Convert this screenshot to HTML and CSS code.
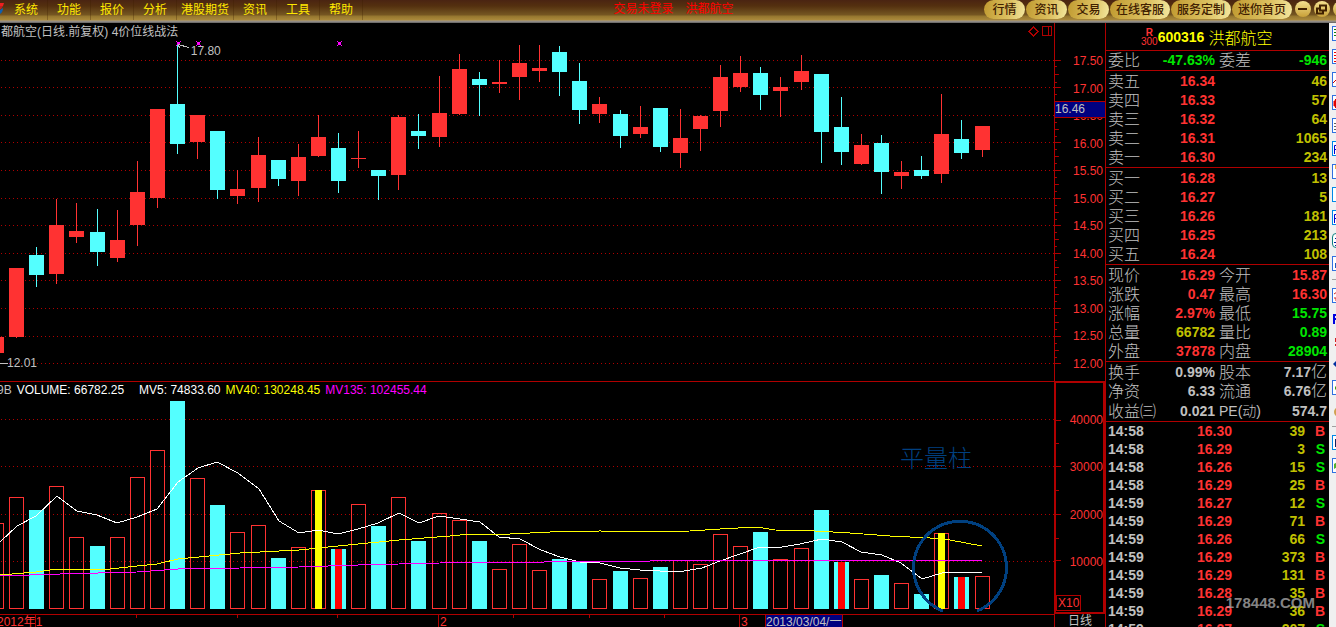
FILE: index.html
```
<!DOCTYPE html>
<html lang="zh-CN">
	<head>
		<meta charset="utf-8">
		<title>洪都航空 600316</title>
		<link rel="stylesheet" href="styles.css">
	</head>
	<body>
		<header class="topbar">
			<svg class="topbar__logo" width="5" height="18" viewBox="0 0 5 18">
				<path d="M0 3H4L3 6H0z" fill="#f02020"/>
				<path d="M0 6H3L1 9H0z" fill="#c02020"/>
				<path d="M0 10L3 8Q3 12 0 14z" fill="#1060b0"/>
			</svg>
			<nav class="menu">
				<button type="button" class="menu__item">系统</button>
				<button type="button" class="menu__item">功能</button>
				<button type="button" class="menu__item">报价</button>
				<button type="button" class="menu__item">分析</button>
				<button type="button" class="menu__item">港股期货</button>
				<button type="button" class="menu__item">资讯</button>
				<button type="button" class="menu__item">工具</button>
				<button type="button" class="menu__item">帮助</button>
			</nav>
			<div class="status"><span>交易未登录</span><span>洪都航空</span></div>
			<div class="pills">
				<button type="button" class="pill">行情</button>
				<button type="button" class="pill">资讯</button>
				<button type="button" class="pill">交易</button>
				<button type="button" class="pill">在线客服</button>
				<button type="button" class="pill">服务定制</button>
				<button type="button" class="pill">迷你首页</button>
				<button type="button" class="round-button" aria-label="最小化">
					<svg width="15" height="15" viewBox="0 0 15 15"><path d="M3 7H12" stroke="#402000" stroke-width="2"/></svg>
				</button>
				<button type="button" class="round-button" aria-label="还原">
					<svg width="15" height="15" viewBox="0 0 15 15"><path d="M6 3.500H12V8.500H6zM6 6.500H3V11.500H9V9" fill="none" stroke="#402000" stroke-width="2"/></svg>
				</button>
				<button type="button" class="round-button" aria-label="关闭">
					<svg width="15" height="15" viewBox="0 0 15 15"><path d="M4 4L11 11M11 4L4 11" stroke="#402000" stroke-width="2"/></svg>
				</button>
			</div>
		</header>
		<main class="workspace">
			<section class="pane pane--price">
				<svg class="pane__canvas" viewBox="0 23 1054 358" preserveAspectRatio="none">
					<path class="grid" d="M1 60.500H1054M1 87.500H1054M1 115.500H1054M1 142.500H1054M1 170.500H1054M1 198.500H1054M1 225.500H1054M1 253.500H1054M1 280.500H1054M1 308.500H1054M1 336.500H1054M1 363.500H1054"/>
					<!-- wicks -->
					<path class="wick wick--up" d="M16.500 268V338M56.500 199V284M76.500 203V243M117.500 210V262M137.500 161V246M157.500 109V208M197.500 115V159M237.500 170V204M258.500 137V202M298.500 144V196M318.500 115V157M358.500 131V168M398.500 115V190M439.500 76V147M459.500 54V115M499.500 60V93M519.500 45V100M539.500 45V82M599.500 97V123M640.500 106V138M680.500 109V168M700.500 115V151M720.500 65V127M740.500 56V92M780.500 77V117M801.500 55V90M861.500 134V165M901.500 161V189M941.500 94V183M982.500 126V157"/>
					<path class="wick wick--down" d="M36.500 247V287M97.500 209V266M177.500 45V154M217.500 131V199M278.500 160V186M338.500 133V193M378.500 170V200M418.500 114V149M479.500 72V116M559.500 46V96M579.500 63V124M620.500 110V148M660.500 108V152M760.500 67V110M821.500 74V163M841.500 97V165M881.500 135V194M921.500 156V179M961.500 120V159"/>
					<!-- bodies -->
					<path class="body--up" d="M0 337h4v16h-4zM9 268h15v69h-15zM49 225h15v49h-15zM69 231h15v6h-15zM110 240h15v18h-15zM130 192h15v33h-15zM150 109h15v89h-15zM190 115h15v27h-15zM230 189h15v7h-15zM251 155h15v33h-15zM291 157h15v24h-15zM311 137h15v19h-15zM351 158h15v1h-15zM391 117h15v58h-15zM432 113h15v24h-15zM452 69h15v45h-15zM492 82h15v2h-15zM512 63h15v14h-15zM532 68h15v3h-15zM592 104h15v10h-15zM633 127h15v7h-15zM673 138h15v15h-15zM693 116h15v13h-15zM713 77h15v34h-15zM733 73h15v14h-15zM773 87h15v4h-15zM794 71h15v11h-15zM854 145h15v19h-15zM894 172h15v4h-15zM934 134h15v40h-15zM975 126h15v24h-15z"/>
					<path class="body--down" d="M29 255h15v20h-15zM90 232h15v20h-15zM170 104h15v40h-15zM210 131h15v59h-15zM271 160h15v19h-15zM331 148h15v33h-15zM371 170h15v6h-15zM411 131h15v5h-15zM472 79h15v6h-15zM552 52h15v20h-15zM572 81h15v29h-15zM613 114h15v22h-15zM653 108h15v39h-15zM753 73h15v22h-15zM814 74h15v58h-15zM834 127h15v25h-15zM874 143h15v29h-15zM914 170h15v6h-15zM954 139h15v14h-15z"/>
					<!-- event marks -->
					<path class="event" d="M177 42h3v3h-3zM176 41h1v1h-1zM180 41h1v1h-1zM176 45h1v1h-1zM180 45h1v1h-1zM197 42h3v3h-3zM196 41h1v1h-1zM200 41h1v1h-1zM196 45h1v1h-1zM200 45h1v1h-1zM338 42h3v3h-3zM337 41h1v1h-1zM341 41h1v1h-1zM337 45h1v1h-1zM341 45h1v1h-1z"/>
					<path class="pointer" d="M178 44.500L189 47.500M178 45L180 48M0 363.500H8"/>
					<path class="corner-icon" d="M1033.500 27L1038 31.500L1033.500 36L1029 31.500zM1042.500 26.500H1051.500V35.500H1042.500zM1048.500 26.500V35.500"/>
				</svg>
				<h1 class="pane__title">都航空(日线.前复权) 4价位线战法</h1>
				<span class="note note--high">17.80</span>
				<span class="note note--low">12.01</span>
			</section>
			<section class="scale scale--price">
				<svg class="pane__canvas" viewBox="0 23 51 358" preserveAspectRatio="none">
					<path class="tick" d="M0 60.500H6M0 87.500H6M0 115.500H6M0 142.500H6M0 170.500H6M0 198.500H6M0 225.500H6M0 253.500H6M0 280.500H6M0 308.500H6M0 336.500H6M0 363.500H6"/>
					<path class="tick" d="M0 66.500H2M0 74.500H4M0 82.500H2M0 94.500H2M0 101.500H4M0 122.500H2M0 129.500H4M0 136.500H2M0 149.500H2M0 156.500H4M0 163.500H2M0 177.500H2M0 184.500H4M0 191.500H2M0 205.500H2M0 212.500H4M0 219.500H2M0 232.500H2M0 239.500H4M0 246.500H2M0 260.500H2M0 267.500H4M0 274.500H2M0 287.500H2M0 294.500H4M0 301.500H2M0 315.500H2M0 322.500H4M0 329.500H2M0 343.500H2M0 350.500H4M0 357.500H2"/>
				</svg>
				<ol class="scale__labels">
					<li>17.50</li>
					<li>17.00</li>
					<li>16.50</li>
					<li>16.00</li>
					<li>15.50</li>
					<li>15.00</li>
					<li>14.50</li>
					<li>14.00</li>
					<li>13.50</li>
					<li>13.00</li>
					<li>12.50</li>
					<li>12.00</li>
				</ol>
				<span class="cursor-price">16.46</span>
			</section>
			<section class="pane pane--volume">
				<svg class="pane__canvas" viewBox="0 382 1054 232" preserveAspectRatio="none">
					<path class="grid" d="M1 419.500H1054M1 466.500H1054M1 514.500H1054M1 561.500H1054"/>
					<path class="volume--up" d="M-10.500 523.500h14v85h-14zM9.500 497.500h14v111h-14zM49.500 486.500h14v122h-14zM69.500 537.500h14v71h-14zM110.500 537.500h14v71h-14zM130.500 477.500h14v131h-14zM150.500 450.500h14v158h-14zM190.500 478.500h14v130h-14zM230.500 532.500h14v76h-14zM251.500 525.500h14v83h-14zM291.500 547.500h14v61h-14zM311.500 490.500h14v118h-14zM351.500 504.500h14v104h-14zM391.500 497.500h14v111h-14zM432.500 513.500h14v95h-14zM452.500 520.500h14v88h-14zM492.500 569.500h14v39h-14zM512.500 544.500h14v64h-14zM532.500 570.500h14v38h-14zM592.500 579.500h14v29h-14zM633.500 578.500h14v30h-14zM673.500 560.500h14v48h-14zM693.500 564.500h14v44h-14zM713.500 534.500h14v74h-14zM733.500 546.500h14v62h-14zM773.500 559.500h14v49h-14zM794.500 548.500h14v60h-14zM854.500 579.500h14v29h-14zM894.500 583.500h14v25h-14zM934.500 533.500h14v75h-14zM975.500 576.500h14v32h-14z"/>
					<path class="body--down" d="M29 510h15v99h-15zM90 546h15v63h-15zM170 401h15v208h-15zM210 505h15v104h-15zM271 558h15v51h-15zM331 549h15v60h-15zM371 526h15v83h-15zM411 541h15v68h-15zM472 541h15v68h-15zM552 559h15v50h-15zM572 562h15v47h-15zM613 571h15v38h-15zM653 567h15v42h-15zM753 532h15v77h-15zM814 510h15v99h-15zM834 562h15v47h-15zM874 575h15v34h-15zM914 594h15v15h-15zM954 577h15v32h-15z"/>
					<path class="bar--yellow" d="M315 490h7v119h-7zM938 533h7v76h-7z"/>
					<path class="bar--red" d="M335 549h7v60h-7zM838 562h7v47h-7zM958 577h7v32h-7z"/>
					<!-- moving averages -->
					<polyline class="line line--mv5" points="0,542 17,526 36,516 57,496 77,511 97,515 117,523 137,517 157,509 178,482 198,468 217,462 238,473 259,489 279,521 299,533 318,530 338,534 358,529 378,523 399,513 419,523 439,516 460,519 480,522 499,537 520,539 541,550 560,557 580,562 600,563 620,568 640,570 660,571 684,571 702,568 720,561 740,554 760,547 782,547 800,544 822,539 842,542 861,552 882,555 901,563 922,579 942,573 962,572 982,573"/>
					<polyline class="line line--mv40" points="0,575 36,572 57,569 110,569 137,566 157,564 178,559 240,553 299,550 338,546 399,540 450,536 470,534 510,534 550,532 600,531 650,532 690,531 720,529 757,527 775,530 815,531 850,533 890,536 930,538 950,540 982,546"/>
					<polyline class="line line--mv135" points="0,576 60,574 137,572 178,569 240,568 299,567 358,565 440,563 650,561 755,560 982,560"/>
					<path class="ring" d="M943 611A46.500 46.500 0 1 1 977 611"/>
				</svg>
				<p class="legend"><span class="legend__name">9B</span><span>VOLUME: 66782.25</span><span class="legend__mv5">MV5: 74833.60</span><span class="legend__mv40">MV40: 130248.45</span><span class="legend__mv135">MV135: 102455.44</span></p>
				<span class="note note--columns">平量柱</span>
			</section>
			<section class="scale scale--volume">
				<svg class="pane__canvas" viewBox="0 382 49 231" preserveAspectRatio="none">
					<path class="tick" d="M0 419.500H5M0 443.500H3M0 466.500H5M0 490.500H3M0 514.500H5M0 538.500H3M0 561.500H5"/>
				</svg>
				<ol class="scale__labels">
					<li>40000</li>
					<li>30000</li>
					<li>20000</li>
					<li>10000</li>
				</ol>
				<span class="multiplier">X10</span>
			</section>
			<section class="dates">
				<svg class="pane__canvas" viewBox="0 615 1054 12" preserveAspectRatio="none">
					<path class="tick" d="M35.500 615V627M136.500 615V618M237.500 615V618M337.500 615V618M513.500 615V618M589.500 615V618M664.500 615V618"/>
				</svg>
				<span class="dates__first">2012年1</span>
				<span class="dates__month">2</span>
				<span class="dates__month">3</span>
				<span class="dates__current">2013/03/04/一</span>
			</section>
			<div class="period">日线</div>

			<aside class="quote">
				<h2 class="quote__title"><span class="quote__badge"><b>R</b><span>300</span></span><b>600316</b><span class="quote__name">洪都航空</span></h2>
				<table class="data">
					<colgroup><col class="col-label"><col class="col-value"><col class="col-label2"><col></colgroup>
					<tbody class="data__group data__group--tight">
						<tr><th>委比</th><td class="green">-47.63%</td><th>委差</th><td class="green">-946</td></tr>
					</tbody>
					<tbody class="data__group">
						<tr><th>卖五</th><td class="red">16.34</td><td colspan="2" class="gold">46</td></tr>
						<tr><th>卖四</th><td class="red">16.33</td><td colspan="2" class="gold">57</td></tr>
						<tr><th>卖三</th><td class="red">16.32</td><td colspan="2" class="gold">64</td></tr>
						<tr><th>卖二</th><td class="red">16.31</td><td colspan="2" class="gold">1065</td></tr>
						<tr><th>卖一</th><td class="red">16.30</td><td colspan="2" class="gold">234</td></tr>
					</tbody>
					<tbody class="data__group">
						<tr><th>买一</th><td class="red">16.28</td><td colspan="2" class="gold">13</td></tr>
						<tr><th>买二</th><td class="red">16.27</td><td colspan="2" class="gold">5</td></tr>
						<tr><th>买三</th><td class="red">16.26</td><td colspan="2" class="gold">181</td></tr>
						<tr><th>买四</th><td class="red">16.25</td><td colspan="2" class="gold">213</td></tr>
						<tr><th>买五</th><td class="red">16.24</td><td colspan="2" class="gold">108</td></tr>
					</tbody>
					<tbody class="data__group">
						<tr><th>现价</th><td class="red">16.29</td><th>今开</th><td class="red">15.87</td></tr>
						<tr><th>涨跌</th><td class="red">0.47</td><th>最高</th><td class="red">16.30</td></tr>
						<tr><th>涨幅</th><td class="red">2.97%</td><th>最低</th><td class="green">15.75</td></tr>
						<tr><th>总量</th><td class="gold">66782</td><th>量比</th><td class="green">0.89</td></tr>
						<tr><th>外盘</th><td class="red">37878</td><th>内盘</th><td class="green">28904</td></tr>
					</tbody>
					<tbody class="data__group">
						<tr><th>换手</th><td>0.99%</td><th>股本</th><td>7.17<span class="unit">亿</span></td></tr>
						<tr><th>净资</th><td>6.33</td><th>流通</th><td>6.76<span class="unit">亿</span></td></tr>
						<tr><th>收益㈢</th><td>0.021</td><th class="latin">PE(动)</th><td>574.7</td></tr>
					</tbody>
				</table>
				<table class="ticks">
					<tbody>
						<tr><td>14:58</td><td class="red">16.30</td><td class="gold">39</td><td class="red">B</td></tr>
						<tr><td>14:58</td><td class="red">16.29</td><td class="gold">3</td><td class="green">S</td></tr>
						<tr><td>14:58</td><td class="red">16.26</td><td class="gold">15</td><td class="green">S</td></tr>
						<tr><td>14:58</td><td class="red">16.29</td><td class="gold">25</td><td class="red">B</td></tr>
						<tr><td>14:59</td><td class="red">16.27</td><td class="gold">12</td><td class="green">S</td></tr>
						<tr><td>14:59</td><td class="red">16.29</td><td class="gold">71</td><td class="red">B</td></tr>
						<tr><td>14:59</td><td class="red">16.26</td><td class="gold">66</td><td class="green">S</td></tr>
						<tr><td>14:59</td><td class="red">16.29</td><td class="gold">373</td><td class="red">B</td></tr>
						<tr><td>14:59</td><td class="red">16.29</td><td class="gold">131</td><td class="red">B</td></tr>
						<tr><td>14:59</td><td class="red">16.28</td><td class="gold">35</td><td class="red">B</td></tr>
						<tr><td>14:59</td><td class="red">16.29</td><td class="gold">36</td><td class="red">B</td></tr>
						<tr><td>14:59</td><td class="red">16.27</td><td class="gold">207</td><td class="green">S</td></tr>
					</tbody>
				</table>
				<span class="watermark">178448.COM</span>
			</aside>

			<div class="toolbar">
				<button type="button" class="tool" aria-label="报价列表"><svg width="13" height="13"><path d="M1 2.500H11M1 5.500H11M1 8.500H11" stroke="#108010"/></svg></button>
				<button type="button" class="tool" aria-label="涨幅排行"><svg width="13" height="13"><path d="M1 2.500H11M1 5.500H11M1 8.500H11M1 11.500H11" stroke="#f00000"/></svg></button>
				<button type="button" class="tool" aria-label="分时走势"><svg width="13" height="13"><path d="M0 10L3 7L6 9L11 3" fill="none" stroke="#d00000"/></svg></button>
				<button type="button" class="tool" aria-label="K线"><svg width="13" height="13"><path d="M1 5H5V10H1zM2.500 3V12" fill="#e00000" stroke="#e00000"/></svg></button>
				<button type="button" class="tool" aria-label="成交明细"><svg width="13" height="13"><path d="M1 4.500H11M1 7.500H11M1 10.500H11" stroke="#606060"/></svg></button>
				<button type="button" class="tool tool--cyan" aria-label="F10资料"><svg width="13" height="13"><path d="M1.500 12V3.500H8M1 7.500H6" fill="none" stroke="#0000d0"/></svg></button>
				<button type="button" class="tool" aria-label="备忘"><svg width="13" height="13"><path d="M2 0H8V4H2z" fill="#f0b040"/></svg></button>
				<button type="button" class="tool tool--cyan" aria-label="新建"></button>
				<button type="button" class="tool tool--cyan" aria-label="公式"><svg width="13" height="13"><path d="M1.500 12V3.500H8M1 7.500H6" fill="none" stroke="#0000d0"/></svg></button>
				<button type="button" class="tool tool--teal" aria-label="周期"><svg width="13" height="13"><path d="M2 4.500H7M1 8.500H7M2 11.500H4" stroke="#0020a0"/></svg></button>
				<button type="button" class="tool" aria-label="统计"><svg width="13" height="13"><path d="M2 6H5V11H2z" fill="#2060c0"/></svg></button>
				<hr class="toolbar__rule">
				<button type="button" class="tool" aria-label="画线"><svg width="13" height="13"><path d="M1 5L4 3M1 9H3V12" fill="none" stroke="#d02020"/></svg></button>
				<button type="button" class="tool tool--flat" aria-label="打印"><svg width="13" height="13"><path d="M1 12V3H7V7H1" fill="none" stroke="#0000e0" stroke-width="2"/></svg></button>
				<button type="button" class="tool tool--flat" aria-label="预警"><svg width="13" height="13"><path d="M2 3H6V7H2zM2 9H6V11H2z" fill="#d02020"/></svg></button>
				<button type="button" class="tool tool--flat" aria-label="移动"><svg width="13" height="13"><path d="M0 6L4 2V10z" fill="#0030a0"/></svg></button>
				<button type="button" class="tool" aria-label="加入自选"><svg width="13" height="13"><path d="M2 7H8" stroke="#40a010" stroke-width="3"/></svg></button>
				<button type="button" class="tool tool--flat" aria-label="金币"><svg width="13" height="13"><circle cx="6" cy="8" r="5" fill="#d0a050"/></svg></button>
				<hr class="toolbar__rule">
				<button type="button" class="tool tool--cyan" aria-label="窗口"><svg width="13" height="13"><path d="M2 3H8V11H2z" fill="#102060"/></svg></button>
				<button type="button" class="tool" aria-label="图表"><svg width="13" height="13"><path d="M1 10V5L4 3V8z" fill="#50b030"/></svg></button>
			</div>
		</main>
	</body>
</html>
```
FILE: styles.css
```
* {
	box-sizing: border-box;
}
body {
	display: grid;
	grid-template-rows: 23px minmax(0, 1fr);
	margin: 0;
	height: 100vh;
	overflow: hidden;
	background: #000;
	color: #c0c0c0;
	font-family: "Liberation Sans", "Noto Sans CJK SC", sans-serif;
	font-size: 12px;
}
button {
	border: 0;
	margin: 0;
	padding: 0;
	font: inherit;
	cursor: pointer;
	flex: none;
}
h1, h2, p, ol {
	margin: 0;
	padding: 0;
	font-size: 12px;
	font-weight: normal;
	list-style: none;
}

/* top bar */
.topbar {
	display: flex;
	align-items: flex-start;
	overflow: hidden;
	white-space: nowrap;
	background: linear-gradient(#4a2412 0, #54300f 6px, #66461a 11px, #765722 15px, #94752e 16px, #ab8a3c 20px, #a09890 21px, #606060 23px);
}
.topbar__logo {
	flex: none;
}
.menu {
	display: flex;
}
.menu__item {
	min-width: 43px;
	height: 20px;
	padding: 0 4px;
	background: none;
	border-right: 1px solid rgba(60, 30, 0, 0.3);
	color: #ffe800;
	line-height: 21px;
}
.status {
	display: flex;
	gap: 12px;
	margin: 0 auto;
	color: #f00;
	line-height: 19px;
}
.pills {
	display: flex;
	gap: 1px;
	margin-right: -13px;
}
.pill {
	height: 19px;
	padding: 0 6px;
	min-width: 41px;
	border-radius: 10px;
	background: linear-gradient(100deg, #c09a30, #dcc060 60%, #f4e8a0);
	color: #402000;
	font-weight: 500;
	line-height: 18px;
}
.round-button {
	width: 16px;
	height: 16px;
	margin: 1px 0 0 2px;
	border-radius: 8px;
	background: linear-gradient(#f4e090, #c8a038);
}
.round-button svg {
	display: block;
}

/* workspace */
.workspace {
	display: grid;
	grid-template-columns: minmax(0, 1fr) 51px 224px 7px;
	grid-template-rows: minmax(0, 358fr) minmax(0, 233fr) 13px;
	grid-template-areas:
		"price price-scale quote toolbar"
		"volume volume-scale quote toolbar"
		"dates period quote toolbar";
}
.pane,
.scale,
.dates {
	position: relative;
	overflow: hidden;
}
.pane--price {
	grid-area: price;
}
.pane--volume {
	grid-area: volume;
	border-top: 1px solid #b00000;
}
.pane__canvas {
	position: absolute;
	top: 0;
	left: 0;
	width: 100%;
	height: 100%;
	shape-rendering: crispEdges;
}
.pane__title {
	position: relative;
	padding-left: 1px;
	line-height: 19px;
}
.grid {
	stroke: #b00000;
	stroke-dasharray: 1 3;
}
.wick--up {
	stroke: #ff3232;
}
.wick--down {
	stroke: #54ffff;
}
.body--up {
	fill: #ff3232;
}
.body--down {
	fill: #54ffff;
}
.volume--up {
	fill: none;
	stroke: #ff3232;
}
.bar--yellow {
	fill: #ff0;
}
.bar--red {
	fill: #f00;
}
.event {
	fill: #f0f;
}
.pointer {
	stroke: #c0c0c0;
}
.corner-icon {
	fill: none;
	stroke: #b00000;
}
.tick {
	stroke: #b00000;
}
.line {
	fill: none;
}
.line--mv5 {
	stroke: #fff;
}
.line--mv40 {
	stroke: #ff0;
}
.line--mv135 {
	stroke: #f0f;
}
.ring {
	fill: none;
	stroke: #004080;
	stroke-width: 3;
}
.note {
	position: absolute;
	line-height: 14px;
}
.note--high {
	left: 18.1%;
	top: 21px;
}
.note--low {
	left: 7px;
	bottom: 11px;
}
.note--columns {
	right: 82px;
	top: 28%;
	color: #004080;
	font-size: 24px;
	font-weight: 300;
	line-height: 24px;
}
.legend {
	position: relative;
	display: flex;
	gap: 5px;
	line-height: 17px;
	color: #fff;
	white-space: nowrap;
}
.legend__name {
	margin-left: -3px;
	color: #c0c0c0;
}
.legend__mv5 {
	margin-left: 10px;
}
.legend__mv40 {
	color: #ff0;
}
.legend__mv135 {
	color: #f0f;
}

/* value scales */
.scale {
	border-left: 1px solid #b00000;
	color: #ff3232;
}
.scale__labels {
	position: relative;
	display: flex;
	flex-direction: column;
	justify-content: space-between;
	height: 100%;
	padding: 28px 2px 7px 0;
	line-height: 20px;
	text-align: right;
}
.scale--price {
	grid-area: price-scale;
}
.scale--volume {
	grid-area: volume-scale;
	border: 2px solid #b00000;
}
.scale--volume .scale__labels {
	padding: 27px 0 40px;
}
.cursor-price {
	position: absolute;
	left: 0;
	right: 0;
	top: 78px;
	height: 17px;
	border: 1px solid #b00000;
	border-width: 1px 0;
	background: #000080;
	color: #c0c0c0;
	line-height: 15px;
}
.multiplier {
	position: absolute;
	left: 0;
	bottom: 1px;
	padding: 0 1px;
	border: 1px solid #b00000;
	line-height: 14px;
}

/* date axis */
.dates {
	grid-area: dates;
	display: grid;
	grid-template-columns: 438fr 301fr 26fr 78fr 211fr;
	border-top: 1px solid #b00000;
	color: #ff3232;
	line-height: 15px;
	white-space: nowrap;
}
.dates__first {
	margin-left: -3px;
}
.dates__month {
	padding-left: 1px;
	border-left: 1px solid #b00000;
}
.dates__current {
	border: 1px solid #b00000;
	border-width: 0 1px;
	background: #000080;
	color: #c0c0c0;
}
.period {
	grid-area: period;
	overflow: hidden;
	border-left: 1px solid #b00000;
	line-height: 15px;
	text-align: center;
}

/* quote panel */
.quote {
	grid-area: quote;
	position: relative;
	overflow: hidden;
	border-left: 1px solid #b00000;
}
.quote__title {
	display: flex;
	align-items: center;
	height: 27px;
	padding-left: 35px;
	color: #ff0;
	font-size: 14px;
	white-space: nowrap;
}
.quote__badge {
	display: flex;
	flex-direction: column;
	align-items: center;
	color: #ff3232;
	font-size: 10px;
	line-height: 9px;
}
.quote__name {
	margin-left: 4px;
	font-size: 16px;
	font-weight: 300;
}
.data,
.ticks {
	width: 100%;
	table-layout: fixed;
	border-collapse: separate;
	border-spacing: 0;
	font-size: 14px;
	font-weight: bold;
}
.col-label {
	width: 52px;
}
.col-value {
	width: 59px;
}
.col-label2 {
	width: 50px;
}
.data th,
.data td {
	height: 19px;
	padding: 0 2px 0 0;
	line-height: 19px;
	text-align: right;
	white-space: nowrap;
}
.data th {
	padding-left: 2px;
	padding-right: 0;
	font-size: 16px;
	font-weight: 300;
	text-align: left;
}
.data th.latin {
	font-size: 14px;
}
.data__group tr:first-child > * {
	height: 21px;
	padding-top: 1px;
	border-top: 1px solid #b00000;
}
.data__group--tight tr:first-child > * {
	height: 20px;
	padding-top: 0;
}
.data__group:last-child tr:last-child > * {
	height: 20px;
}
.unit {
	font-size: 16px;
	font-weight: 300;
	line-height: 16px;
}
.ticks {
	border-top: 1px solid #b00000;
}
.ticks td {
	height: 18px;
	padding: 0;
	line-height: 18px;
	text-align: right;
}
.ticks td:first-child {
	width: 50px;
	padding-left: 2px;
	text-align: left;
}
.ticks td:nth-child(2) {
	width: 76px;
}
.ticks td:nth-child(3) {
	width: 73px;
}
.ticks td:last-child {
	padding-right: 4px;
}
.red {
	color: #ff3232;
}
.green {
	color: #00e600;
}
.gold {
	color: #c0c000;
}
.watermark {
	position: absolute;
	right: 14px;
	bottom: 12px;
	color: #b0b0b0;
	font-size: 15px;
	font-weight: bold;
	line-height: 24px;
	opacity: 0.75;
}

/* tool strip, mostly off the right edge */
.toolbar {
	grid-area: toolbar;
	display: flex;
	flex-direction: column;
	gap: 8px;
	overflow: hidden;
	padding: 3px 0 0 3px;
	background: #f0f0f0;
}
.tool {
	width: 15px;
	height: 15px;
	border: 1px solid #3070e0;
	background: #fff;
}
.tool svg {
	display: block;
}
.tool--cyan {
	border-color: #0088e8;
}
.tool--teal {
	border-color: #108080;
	border-radius: 4px;
}
.tool--flat {
	border-color: transparent;
	background: none;
}
.toolbar__rule {
	flex: none;
	width: 15px;
	height: 1px;
	margin: 0;
	border: 0;
	background: #a0a0a0;
}
```
